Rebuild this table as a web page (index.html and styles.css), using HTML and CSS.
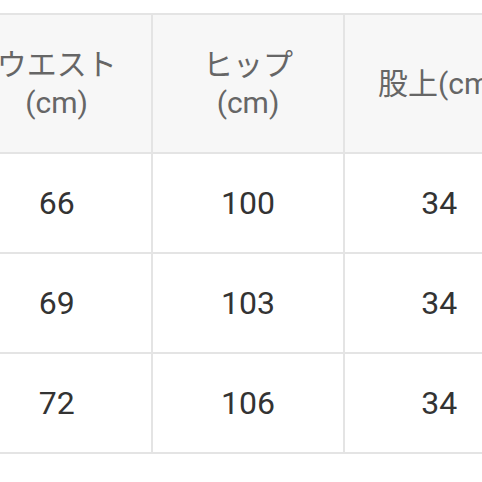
FILE: index.html
```html
<!DOCTYPE html>
<html lang="ja">
<head>
<meta charset="utf-8">
<link rel="stylesheet" href="styles.css">
</head>
<body>
<div class="page">
  <table class="size-table">
    <tr class="head">
      <th>ウエスト<br>(cm)</th>
      <th>ヒップ<br>(cm)</th>
      <th>股上(cm)</th>
    </tr>
    <tr class="row">
      <td>66</td><td>100</td><td>34</td>
    </tr>
    <tr class="row">
      <td>69</td><td>103</td><td>34</td>
    </tr>
    <tr class="row">
      <td>72</td><td>106</td><td>34</td>
    </tr>
  </table>
  <div class="footer"></div>
</div>
</body>
</html>
```
FILE: styles.css
```css
html, body {
  margin: 0;
  padding: 0;
  background: #ffffff;
  overflow: hidden;
}
.page {
  width: 482px;
  height: 482px;
  padding-top: 13px;
  box-sizing: border-box;
  overflow: hidden;
}
.size-table {
  border-collapse: collapse;
  margin-left: -40px;
  table-layout: fixed;
  width: 576px;
  font-family: Roboto, "Noto Sans CJK JP", sans-serif;
}
.size-table th,
.size-table td {
  border: 2px solid #e4e4e4;
  text-align: center;
  vertical-align: middle;
  padding: 0;
  white-space: nowrap;
}
.head th {
  height: 137px;
  background: #f7f7f7;
  color: #666666;
  font-weight: normal;
  font-size: 30px;
  line-height: 38px;
}
.row td {
  height: 98px;
  color: #333333;
  font-size: 32px;
}
.footer {
  height: 28px;
  border-bottom: 2px solid #cfcfcf;
}
```
